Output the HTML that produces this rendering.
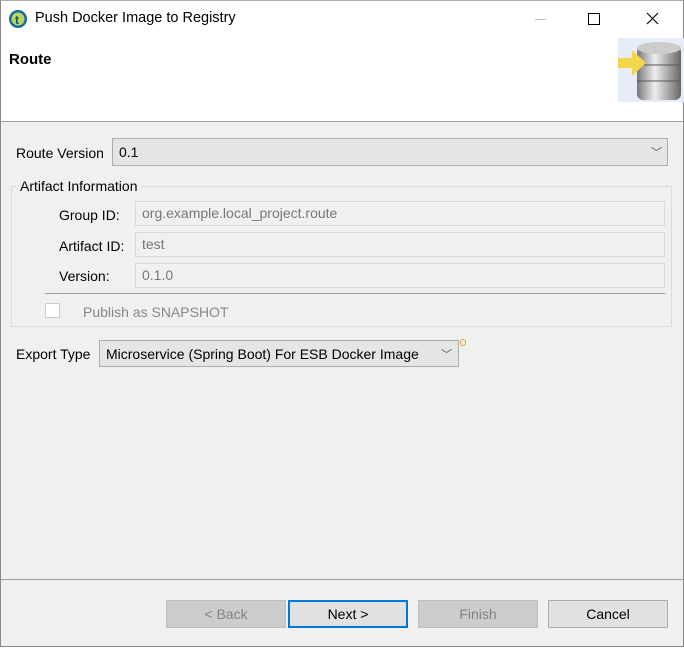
<!DOCTYPE html>
<html><head><style>
body{margin:0;width:684px;height:648px;background:#fff;font-family:"Liberation Sans",sans-serif;font-size:14px;color:#000;position:relative;overflow:hidden}
.a{position:absolute}
.win{left:0;top:0;width:682px;height:645px;border:1px solid #888;border-top:1px solid #aaa;background:#f0f0f0}
.inp{background:#f0f0f0;border:1px solid #d9d9d9;color:#777;box-sizing:border-box;padding:3px 6px;height:25px;line-height:17px}
.btn{box-sizing:border-box;height:28px;width:120px;text-align:center;line-height:26px;background:#e1e1e1;border:1px solid #adadad}
.dis{background:#ccc;border-color:#bfbfbf;color:#838383}
</style></head><body>
<div class="a win"></div>
<div class="a" style="left:1px;top:1px;width:682px;height:120px;background:#fff"></div>
<div class="a" style="left:1px;top:121px;width:682px;height:1px;background:#a0a0a0"></div>
<svg class="a" style="left:8px;top:9px" width="20" height="20"><circle cx="10" cy="10" r="9" fill="#1a6aa0"/><circle cx="10" cy="10" r="6.5" fill="#b9d55a"/><text x="7" y="15" font-size="12" font-weight="bold" fill="#1a4a70" font-family="Liberation Sans">t</text></svg>
<div class="a" style="left:35px;top:10px;font-size:14.5px;white-space:nowrap">Push Docker Image to Registry</div>
<div class="a" style="left:535px;top:19px;width:11px;height:1px;background:#bbb"></div>
<div class="a" style="left:588px;top:13px;width:10px;height:10px;border:1px solid #000"></div>
<svg class="a" style="left:646px;top:12px" width="13" height="13"><path d="M1 1L12 12M12 1L1 12" stroke="#000" stroke-width="1.1"/></svg>
<div class="a" style="left:9px;top:51px;font-weight:bold;font-size:15px">Route</div>
<svg class="a" style="left:618px;top:38px" width="66" height="64"><rect width="66" height="64" fill="#e6ecf8"/><defs><linearGradient id="g" x1="0" x2="1"><stop offset="0" stop-color="#777"/><stop offset=".4" stop-color="#eee"/><stop offset="1" stop-color="#666"/></linearGradient></defs><rect x="19" y="8" width="44" height="54" rx="6" fill="url(#g)"/><ellipse cx="41" cy="10" rx="22" ry="6" fill="#ccc"/><line x1="19" y1="27" x2="63" y2="27" stroke="#555"/><line x1="19" y1="43" x2="63" y2="43" stroke="#555"/><path d="M0 20h14v-8l14 13-14 13v-8H0z" fill="#f4d64a"/></svg>
<div class="a" style="left:16px;top:145px">Route Version</div>
<div class="a inp" style="left:112px;top:138px;width:556px;height:28px;background:#e5e5e5;border-color:#adadad;color:#000;padding-top:5px">0.1</div>
<div class="a" style="left:651px;top:144px;color:#555;font-size:11px">﹀</div>
<div class="a" style="left:11px;top:186px;width:661px;height:141px;border:1px solid #dcdcdc;box-sizing:border-box"></div>
<div class="a" style="left:16px;top:178px;background:#f0f0f0;padding:0 4px">Artifact Information</div>
<div class="a" style="left:59px;top:207px">Group ID:</div>
<div class="a inp" style="left:135px;top:201px;width:530px">org.example.local_project.route</div>
<div class="a" style="left:59px;top:238px">Artifact ID:</div>
<div class="a inp" style="left:135px;top:232px;width:530px">test</div>
<div class="a" style="left:59px;top:268px">Version:</div>
<div class="a inp" style="left:135px;top:263px;width:530px">0.1.0</div>
<div class="a" style="left:45px;top:293px;width:620px;height:1px;background:#a0a0a0"></div>
<div class="a" style="left:45px;top:303px;width:13px;height:13px;border:1px solid #ccc;background:#fff"></div>
<div class="a" style="left:83px;top:304px;color:#888">Publish as SNAPSHOT</div>
<div class="a" style="left:16px;top:346px">Export Type</div>
<div class="a inp" style="left:99px;top:340px;width:360px;height:27px;background:#e5e5e5;border-color:#adadad;color:#000;padding-top:5px">Microservice (Spring Boot) For ESB Docker Image</div>
<div class="a" style="left:441px;top:346px;color:#555;font-size:11px">﹀</div>
<div class="a" style="left:460px;top:339px;width:4px;height:5px;border:1px solid #e8a030;border-radius:3px"></div>
<div class="a" style="left:1px;top:579px;width:682px;height:1px;background:#a0a0a0"></div>
<div class="a btn dis" style="left:166px;top:600px">&lt; Back</div>
<div class="a btn" style="left:288px;top:600px;border:2px solid #0078d7;line-height:24px">Next &gt;</div>
<div class="a btn dis" style="left:418px;top:600px">Finish</div>
<div class="a btn" style="left:548px;top:600px">Cancel</div>
</body></html>
